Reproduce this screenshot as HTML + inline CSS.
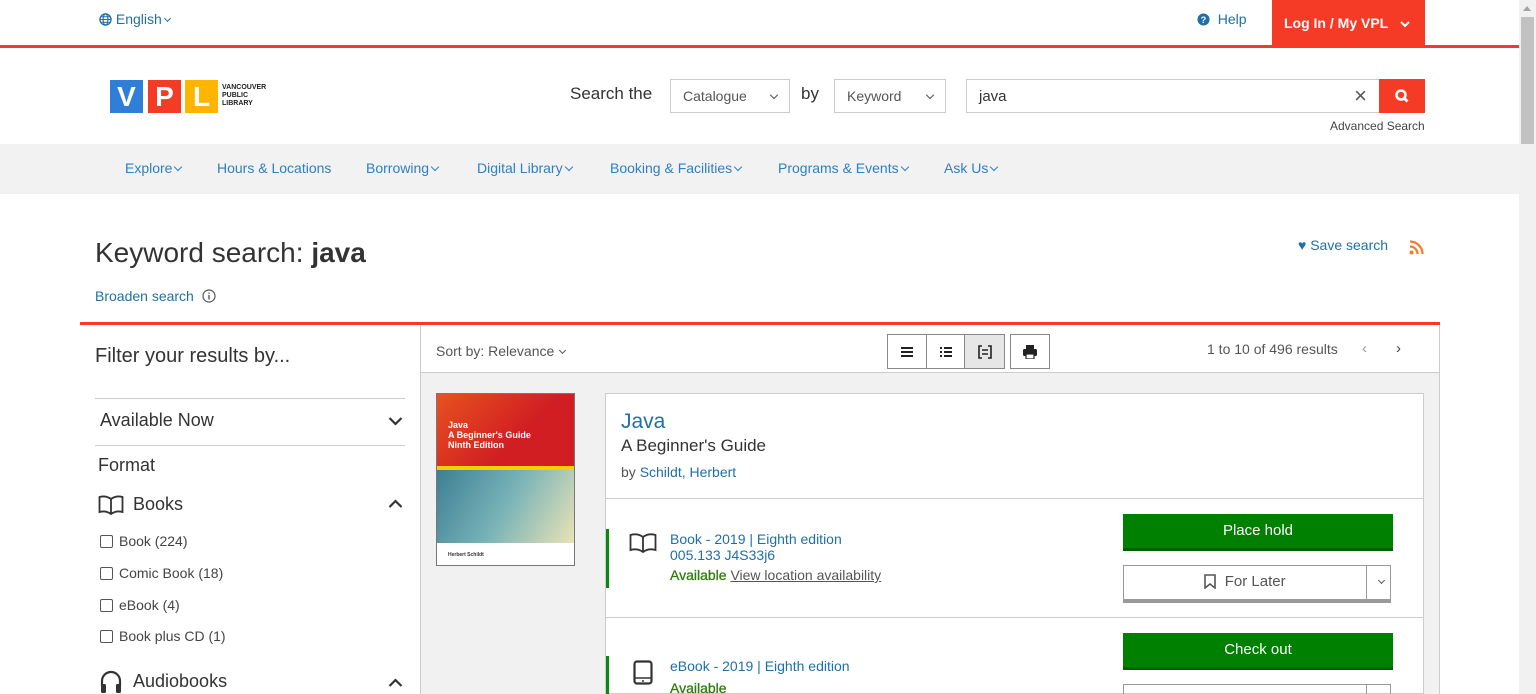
<!DOCTYPE html>
<html><head><meta charset="utf-8"><style>
*{box-sizing:border-box;margin:0;padding:0}
html{width:1536px;height:694px;overflow:hidden}
body{width:1536px;height:694px;overflow:hidden;position:relative;background:#fff;font-family:"Liberation Sans",Arial,sans-serif;color:#333}
.a{position:absolute;white-space:nowrap}
.blue{color:#1f6fa8}
.nav{color:#2f7fc1;font-size:14px}
.cb{display:inline-block;width:13px;height:13px;border:1.5px solid #555;border-radius:2px;vertical-align:-2px;margin-right:6px}
.ch{display:inline-block;width:6px;height:6px;border-right:1.3px solid currentColor;border-bottom:1.3px solid currentColor;transform:rotate(45deg);vertical-align:3px;margin-left:3px}
</style></head><body>
<div class="a blue" style="left:99px;top:11px;font-size:14px"><svg width="13" height="13" viewBox="0 0 14 14" style="vertical-align:-2px"><circle cx="7" cy="7" r="6" fill="none" stroke="#1f6fa8" stroke-width="1.4"/><ellipse cx="7" cy="7" rx="2.6" ry="6" fill="none" stroke="#1f6fa8" stroke-width="1.2"/><path d="M1 7h12M2 4h10M2 10h10" stroke="#1f6fa8" stroke-width="1.1"/></svg> English<span class="ch" style="width:5px;height:5px"></span></div>
<div class="a blue" style="left:1197px;top:11px;font-size:14px"><svg width="13" height="13" viewBox="0 0 14 14" style="vertical-align:-2px"><circle cx="7" cy="7" r="6.5" fill="#1f6fa8"/><text x="7" y="11" font-size="10" font-weight="bold" fill="#fff" text-anchor="middle" font-family="Liberation Sans">?</text></svg>&nbsp; Help</div>
<div class="a" style="left:1272px;top:0;width:153px;height:46px;background:#f53a26;color:#fff;font-weight:bold;font-size:14px;padding:15px 0 0 12px">Log In / My VPL &nbsp;&nbsp;<svg width="10" height="8" viewBox="0 0 10 8"><path d="M1 2l4 4 4-4" stroke="#fff" stroke-width="2" fill="none"/></svg></div>
<div class="a" style="left:0;top:45px;width:1519px;height:3px;background:#f53a26"></div>
<div class="a" style="left:1519px;top:0;width:17px;height:694px;background:#f1f1f1"></div>
<div class="a" style="left:1521px;top:17px;width:13px;height:127px;background:#c1c1c1"></div>
<div class="a" style="left:1523px;top:6px;width:0;height:0;border-left:4px solid transparent;border-right:4px solid transparent;border-bottom:5px solid #a3a3a3"></div>
<div class="a" style="left:110px;top:80px;width:33px;height:33px;background:#2f7fd8;color:#fff;font-weight:bold;font-size:28px;text-align:center;line-height:33px">V</div>
<div class="a" style="left:148px;top:80px;width:33px;height:33px;background:#f53a26;color:#fff;font-weight:bold;font-size:28px;text-align:center;line-height:33px">P</div>
<div class="a" style="left:185px;top:80px;width:33px;height:33px;background:#ffb400;color:#fff;font-weight:bold;font-size:28px;text-align:center;line-height:33px">L</div>
<div class="a" style="left:222px;top:84px;font-size:7px;font-weight:bold;line-height:8px;color:#222">VANCOUVER<br>PUBLIC<br>LIBRARY</div>
<div class="a" style="left:570px;top:84px;font-size:17px;color:#333">Search the</div>
<div class="a" style="left:670px;top:79px;width:120px;height:34px;border:1px solid #ccc;font-size:14px;color:#555;padding:8px 12px">Catalogue<span class="ch" style="position:absolute;right:12px;top:12px"></span></div>
<div class="a" style="left:801px;top:84px;font-size:17px">by</div>
<div class="a" style="left:834px;top:79px;width:112px;height:34px;border:1px solid #ccc;font-size:14px;color:#555;padding:8px 12px">Keyword<span class="ch" style="position:absolute;right:12px;top:12px"></span></div>
<div class="a" style="left:966px;top:79px;width:414px;height:34px;border:1px solid #ccc;font-size:15px;color:#333;padding:8px 12px">java<span style="position:absolute;right:12px;top:3px;font-size:22px;color:#555">&#215;</span></div>
<div class="a" style="left:1379px;top:79px;width:46px;height:34px;background:#f53a26"><svg width="46" height="34" viewBox="0 0 46 34"><circle cx="22" cy="16" r="4.5" stroke="#fff" stroke-width="2.5" fill="none"/><path d="M25 19l3.5 3.5" stroke="#fff" stroke-width="2.8"/></svg></div>
<div class="a" style="left:1330px;top:119px;font-size:12px;color:#444">Advanced Search</div>
<div class="a" style="left:0;top:144px;width:1519px;height:50px;background:#f2f2f2"></div>
<div class="a nav" style="left:125px;top:160px">Explore<span class="ch"></span></div>
<div class="a nav" style="left:217px;top:160px">Hours &amp; Locations</div>
<div class="a nav" style="left:366px;top:160px">Borrowing<span class="ch"></span></div>
<div class="a nav" style="left:477px;top:160px">Digital Library<span class="ch"></span></div>
<div class="a nav" style="left:610px;top:160px">Booking &amp; Facilities<span class="ch"></span></div>
<div class="a nav" style="left:778px;top:160px">Programs &amp; Events<span class="ch"></span></div>
<div class="a nav" style="left:944px;top:160px">Ask Us<span class="ch"></span></div>
<div class="a" style="left:95px;top:237px;font-size:28px;color:#333">Keyword search: <b>java</b></div>
<div class="a blue" style="left:95px;top:288px;font-size:14px">Broaden search &nbsp;<svg width="14" height="14" viewBox="0 0 14 14" style="vertical-align:-2px"><circle cx="7" cy="7" r="6" fill="none" stroke="#555" stroke-width="1.2"/><path d="M7 6v4.5M7 3.5v1.3" stroke="#555" stroke-width="1.4"/></svg></div>
<div class="a blue" style="left:1298px;top:237px;font-size:14px"><span style="font-size:14px">&#9829;</span> Save search</div>
<div class="a" style="left:1409px;top:240px"><svg width="15" height="15" viewBox="0 0 15 15"><circle cx="2.5" cy="12.5" r="2" fill="#f57a2a"/><path d="M1 6.5a7.5 7.5 0 0 1 7.5 7.5M1 1.5a12.5 12.5 0 0 1 12.5 12.5" stroke="#f57a2a" stroke-width="2.2" fill="none"/></svg></div>
<div class="a" style="left:80px;top:322px;width:1360px;height:3px;background:#f53a26"></div>
<div class="a" style="left:95px;top:345px;font-size:20px;color:#333">Filter your results by...</div>
<div class="a" style="left:95px;top:398px;width:310px;height:1px;background:#ccc"></div>
<div class="a" style="left:100px;top:410px;font-size:18px;color:#333">Available Now</div>
<svg class="a" style="left:388px;top:416px" width="15" height="10" viewBox="0 0 15 10"><path d="M1.5 2l6 6 6-6" stroke="#333" stroke-width="2.2" fill="none"/></svg>
<div class="a" style="left:95px;top:445px;width:310px;height:1px;background:#ccc"></div>
<div class="a" style="left:98px;top:455px;font-size:18px;color:#333">Format</div>
<svg class="a" style="left:98px;top:494px" width="26" height="22" viewBox="0 0 26 22"><path d="M13 5C9 2 5 2 1.5 3v15c3.5-1 7.5-1 11.5 2 4-3 8-3 11.5-2V3C21 2 17 2 13 5zM13 5v15" stroke="#333" stroke-width="1.8" fill="none"/></svg>
<div class="a" style="left:133px;top:494px;font-size:18px;color:#333">Books</div>
<svg class="a" style="left:388px;top:499px" width="15" height="10" viewBox="0 0 15 10"><path d="M1.5 8l6-6 6 6" stroke="#333" stroke-width="2.2" fill="none"/></svg>
<div class="a" style="left:100px;top:533px;font-size:14px;color:#444"><span class="cb"></span>Book (224)</div>
<div class="a" style="left:100px;top:565px;font-size:14px;color:#444"><span class="cb"></span>Comic Book (18)</div>
<div class="a" style="left:100px;top:597px;font-size:14px;color:#444"><span class="cb"></span>eBook (4)</div>
<div class="a" style="left:100px;top:628px;font-size:14px;color:#444"><span class="cb"></span>Book plus CD (1)</div>
<svg class="a" style="left:100px;top:670px" width="22" height="24" viewBox="0 0 22 24"><path d="M2 16v-5a9 9 0 0 1 18 0v5" stroke="#333" stroke-width="2.2" fill="none"/><rect x="1" y="14" width="5" height="9" rx="1.5" fill="#333"/><rect x="16" y="14" width="5" height="9" rx="1.5" fill="#333"/></svg>
<div class="a" style="left:133px;top:671px;font-size:18px;color:#333">Audiobooks</div>
<svg class="a" style="left:388px;top:678px" width="15" height="10" viewBox="0 0 15 10"><path d="M1.5 8l6-6 6 6" stroke="#333" stroke-width="2.2" fill="none"/></svg>
<div class="a" style="left:420px;top:325px;width:1020px;height:369px;border-left:1px solid #ccc;border-right:1px solid #ccc;background:#f1f1f1"></div>
<div class="a" style="left:421px;top:325px;width:1018px;height:48px;background:#fff;border-bottom:1px solid #ccc"></div>
<div class="a" style="left:436px;top:343px;font-size:14px;color:#555">Sort by: Relevance<span class="ch" style="width:5px;height:5px;margin-left:6px"></span></div>
<div class="a" style="left:887px;top:334px;width:118px;height:35px;border:1px solid #888;display:flex">
 <div style="width:39px;border-right:1px solid #888;display:flex;align-items:center;justify-content:center"><svg width="14" height="12"><path d="M1 2h12M1 6h12M1 10h12" stroke="#222" stroke-width="2"/></svg></div>
 <div style="width:38px;border-right:1px solid #888;display:flex;align-items:center;justify-content:center"><svg width="14" height="12"><path d="M1 2h2M1 6h2M1 10h2M5 2h8M5 6h8M5 10h8" stroke="#222" stroke-width="2"/></svg></div>
 <div style="flex:1;background:#e6e6e6;display:flex;align-items:center;justify-content:center"><svg width="14" height="14"><path d="M4 1H1v12h3M10 1h3v12h-3M4 5h6M4 9h6" stroke="#222" stroke-width="1.6" fill="none"/></svg></div>
</div>
<div class="a" style="left:1010px;top:334px;width:40px;height:35px;border:1px solid #888;display:flex;align-items:center;justify-content:center"><svg width="16" height="14" viewBox="0 0 16 14"><rect x="4" y="0" width="8" height="4" fill="#222"/><rect x="1" y="4" width="14" height="7" rx="1.5" fill="#222"/><rect x="4" y="9" width="8" height="5" fill="#fff" stroke="#222" stroke-width="1.2"/></svg></div>
<div class="a" style="left:1207px;top:341px;font-size:14px;color:#555">1 to 10 of 496 results</div>
<div class="a" style="left:1362px;top:340px;font-size:15px;color:#999">&#8249;</div>
<div class="a" style="left:1396px;top:340px;font-size:15px;color:#444">&#8250;</div>
<div class="a" style="left:436px;top:393px;width:139px;height:173px;border:1px solid #777;background:#fff;overflow:hidden">
 <div style="height:72px;background:linear-gradient(135deg,#e8521f,#d01e22 60%);color:#fff;font-size:9px;font-weight:bold;padding:26px 0 0 11px;line-height:10px">Java<br>A Beginner's Guide<br>Ninth Edition</div>
 <div style="height:4px;background:#f4d000"></div>
 <div style="height:73px;background:linear-gradient(120deg,#3c7f94,#79b3b8 50%,#e9e3b6)"></div>
 <div style="font-size:5px;font-weight:bold;padding:9px 0 0 11px">Herbert Schildt</div>
</div>
<div class="a" style="left:605px;top:393px;width:819px;height:301px;background:#fff;border:1px solid #ccc"></div>
<div class="a" style="left:621px;top:410px;font-size:21px;color:#1f6fa8">Java</div>
<div class="a" style="left:621px;top:436px;font-size:17px;color:#333">A Beginner's Guide</div>
<div class="a" style="left:621px;top:464px;font-size:14px;color:#555">by <span class="blue">Schildt, Herbert</span></div>
<div class="a" style="left:606px;top:498px;width:817px;height:1px;background:#ccc"></div>
<div class="a" style="left:606px;top:529px;width:3px;height:59px;background:#0a8a0a"></div>
<svg class="a" style="left:629px;top:532px" width="28" height="22" viewBox="0 0 28 22"><path d="M14 5C10 2 5 2 1.5 3v15c3.5-1 8.5-1 12.5 2 4-3 9-3 12.5-2V3C23 2 18 2 14 5zM14 5v15" stroke="#333" stroke-width="1.8" fill="none"/></svg>
<div class="a blue" style="left:670px;top:531px;font-size:14px">Book - 2019 | Eighth edition</div>
<div class="a blue" style="left:670px;top:547px;font-size:14px">005.133 J4S33j6</div>
<div class="a" style="left:670px;top:567px;font-size:14px"><b style="color:#2e7d0a;font-weight:normal;-webkit-text-stroke:.3px #2e7d0a">Available</b> <span style="color:#555;text-decoration:underline">View location availability</span></div>
<div class="a" style="left:1123px;top:514px;width:270px;height:37px;background:#008000;border-bottom:3px solid #006000;color:#fff;font-size:15px;text-align:center;line-height:34px">Place hold</div>
<div class="a" style="left:1123px;top:565px;width:268px;height:38px;border:1px solid #999;border-bottom:4px solid #999;font-size:15px;color:#555">
 <div style="position:absolute;left:0;top:0;width:242px;height:33px;text-align:center;line-height:32px"><svg width="12" height="15" viewBox="0 0 12 15" style="vertical-align:-3px"><path d="M1 1h10v13l-5-4-5 4z" stroke="#555" stroke-width="1.6" fill="none"/></svg>&nbsp; For Later</div>
 <div style="position:absolute;left:242px;top:0;width:1px;height:33px;background:#999"></div>
 <div class="ch" style="position:absolute;left:252px;top:12px;width:5px;height:5px"></div>
</div>
<div class="a" style="left:606px;top:617px;width:817px;height:1px;background:#ccc"></div>
<div class="a" style="left:1123px;top:633px;width:270px;height:37px;background:#008000;border-bottom:3px solid #006000;color:#fff;font-size:15px;text-align:center;line-height:34px">Check out</div>
<div class="a" style="left:1123px;top:684px;width:268px;height:10px;border:1px solid #999;border-bottom:none"><div style="position:absolute;left:242px;top:0;width:1px;height:10px;background:#999"></div></div>
<div class="a" style="left:606px;top:656px;width:3px;height:38px;background:#0a8a0a"></div>
<svg class="a" style="left:633px;top:660px" width="20" height="25" viewBox="0 0 20 25"><rect x="1.5" y="1.5" width="17" height="22" rx="2.5" stroke="#333" stroke-width="2.2" fill="none"/><path d="M2 18h16" stroke="#333" stroke-width="1.5"/><circle cx="10" cy="21" r="1" fill="#333"/></svg>
<div class="a blue" style="left:670px;top:658px;font-size:14px">eBook - 2019 | Eighth edition</div>
<div class="a" style="left:670px;top:680px;font-size:14px;color:#2e7d0a;-webkit-text-stroke:.3px #2e7d0a">Available</div>
</body></html>
